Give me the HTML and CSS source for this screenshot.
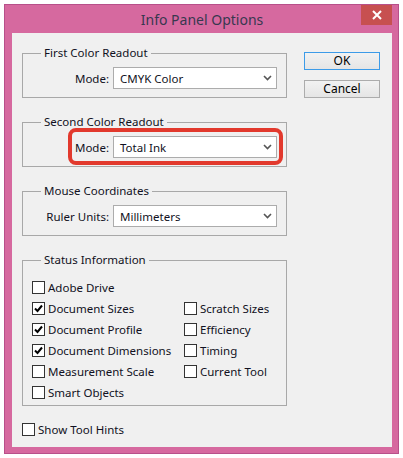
FILE: index.html
```html
<!DOCTYPE html>
<html lang="en">
<head>
<meta charset="utf-8">
<title>Info Panel Options</title>
<link rel="stylesheet" href="styles.css">
</head>
<body>
<div class="window">
  <div class="titlebar">
    <span class="title">Info Panel Options</span>
    <button class="close" type="button" aria-label="Close">
      <svg width="10" height="10" viewBox="0 0 10 10"><path d="M1 1 L9 9 M9 1 L1 9" stroke="#fff" stroke-width="2" fill="none"/></svg>
    </button>
  </div>
  <div class="client">
    <div class="groups">
      <fieldset class="group">
        <legend>First Color Readout</legend>
        <div class="row">
          <span class="lbl">Mode:</span>
          <div class="select"><span>CMYK Color</span><svg class="chev" width="9" height="6" viewBox="0 0 9 6"><path d="M1 1 L4.5 4.5 L8 1" stroke="#555" stroke-width="1.6" fill="none"/></svg></div>
        </div>
      </fieldset>
      <fieldset class="group">
        <legend>Second Color Readout</legend>
        <div class="row">
          <div class="highlight">
            <span class="lbl">Mode:</span>
            <div class="select"><span>Total Ink</span><svg class="chev" width="9" height="6" viewBox="0 0 9 6"><path d="M1 1 L4.5 4.5 L8 1" stroke="#555" stroke-width="1.6" fill="none"/></svg></div>
          </div>
        </div>
      </fieldset>
      <fieldset class="group">
        <legend>Mouse Coordinates</legend>
        <div class="row">
          <span class="lbl">Ruler Units:</span>
          <div class="select"><span>Millimeters</span><svg class="chev" width="9" height="6" viewBox="0 0 9 6"><path d="M1 1 L4.5 4.5 L8 1" stroke="#555" stroke-width="1.6" fill="none"/></svg></div>
        </div>
      </fieldset>
      <fieldset class="group status">
        <legend>Status Information</legend>
        <div class="checks">
          <div class="check"><span class="box"></span>Adobe Drive</div>
          <div class="check empty"></div>
          <div class="check"><span class="box on"><svg width="11" height="11" viewBox="0 0 11 11"><path d="M2 5.5 L4.5 8 L9 2.5" stroke="#000" stroke-width="2" fill="none"/></svg></span>Document Sizes</div>
          <div class="check"><span class="box"></span>Scratch Sizes</div>
          <div class="check"><span class="box on"><svg width="11" height="11" viewBox="0 0 11 11"><path d="M2 5.5 L4.5 8 L9 2.5" stroke="#000" stroke-width="2" fill="none"/></svg></span>Document Profile</div>
          <div class="check"><span class="box"></span>Efficiency</div>
          <div class="check"><span class="box on"><svg width="11" height="11" viewBox="0 0 11 11"><path d="M2 5.5 L4.5 8 L9 2.5" stroke="#000" stroke-width="2" fill="none"/></svg></span>Document Dimensions</div>
          <div class="check"><span class="box"></span>Timing</div>
          <div class="check"><span class="box"></span>Measurement Scale</div>
          <div class="check"><span class="box"></span>Current Tool</div>
          <div class="check"><span class="box"></span>Smart Objects</div>
          <div class="check empty"></div>
        </div>
      </fieldset>
      <div class="check hints"><span class="box"></span>Show Tool Hints</div>
    </div>
    <div class="buttons">
      <button class="btn default" type="button">OK</button>
      <button class="btn" type="button">Cancel</button>
    </div>
  </div>
</div>
</body>
</html>
```
FILE: styles.css
```css
* { box-sizing: border-box; }
html, body { margin: 0; padding: 0; background: #fff; }
body { padding: 4px; font-family: "Noto Sans", "Open Sans", sans-serif; font-size: 11.5px; color: #111122; }

.window {
  width: 395px;
  height: 450px;
  border: 1px solid #b8508a;
  background: #d6699f;
  padding: 0 6px 6px 7px;
  display: flex;
  flex-direction: column;
}
.titlebar {
  position: relative;
  height: 28px;
  display: flex;
  align-items: center;
  justify-content: center;
}
.title {
  font-size: 14px;
  color: #38384f;
  padding-top: 1px;
}
.close {
  position: absolute;
  top: 0;
  right: 0;
  width: 31px;
  height: 20px;
  border: 0;
  padding: 0;
  background: #c75050;
  display: flex;
  align-items: center;
  justify-content: center;
}
.client {
  flex: 1;
  background: #f0f0f0;
  display: flex;
  padding: 12px 0 0 10px;
  gap: 17px;
}
.groups {
  width: 265px;
  display: flex;
  flex-direction: column;
}
.group {
  margin: 0 0 16px 0;
  padding: 0 9px 8px 9px;
  border: 1px solid #a8a8a8;
  min-width: 0;
}
.group legend {
  padding: 0 3px;
  margin-left: 9px;
  line-height: 16px;
}
.row {
  margin-top: 6px;
  display: flex;
  justify-content: flex-end;
  align-items: center;
}
.lbl { margin-right: 4px; }
.select {
  width: 164px;
  height: 22px;
  background: #fff;
  border: 1px solid #acacac;
  display: flex;
  align-items: center;
  justify-content: space-between;
  padding: 0 4px 0 6px;
}
.highlight {
  position: relative;
  display: flex;
  align-items: center;
}
.highlight::after {
  content: "";
  position: absolute;
  left: -7px;
  right: -6px;
  top: -8px;
  bottom: -7px;
  border: 4px solid #e2392d;
  border-radius: 8px;
}
.status { padding-bottom: 2px; }
.checks {
  margin-top: 9px;
  display: grid;
  grid-template-columns: 152px 1fr;
  grid-auto-rows: 21px;
}
.check {
  display: flex;
  align-items: center;
  white-space: nowrap;
}
.box {
  width: 13px;
  height: 13px;
  border: 1px solid #333;
  background: #fff;
  margin-right: 3px;
  display: flex;
  align-items: center;
  justify-content: center;
  flex: none;
}
.hints { height: 21px; margin-top: -3px; }
.buttons {
  display: flex;
  flex-direction: column;
  padding-top: 7px;
  gap: 10px;
}
.btn {
  width: 76px;
  height: 18px;
  padding: 0;
  font: inherit;
  font-size: 12px;
  color: #000;
  line-height: 14px;
  border: 1px solid #acacac;
  background: linear-gradient(#f2f2f2, #e5e5e5);
}
.btn.default { border-color: #3c9be8; }
```
